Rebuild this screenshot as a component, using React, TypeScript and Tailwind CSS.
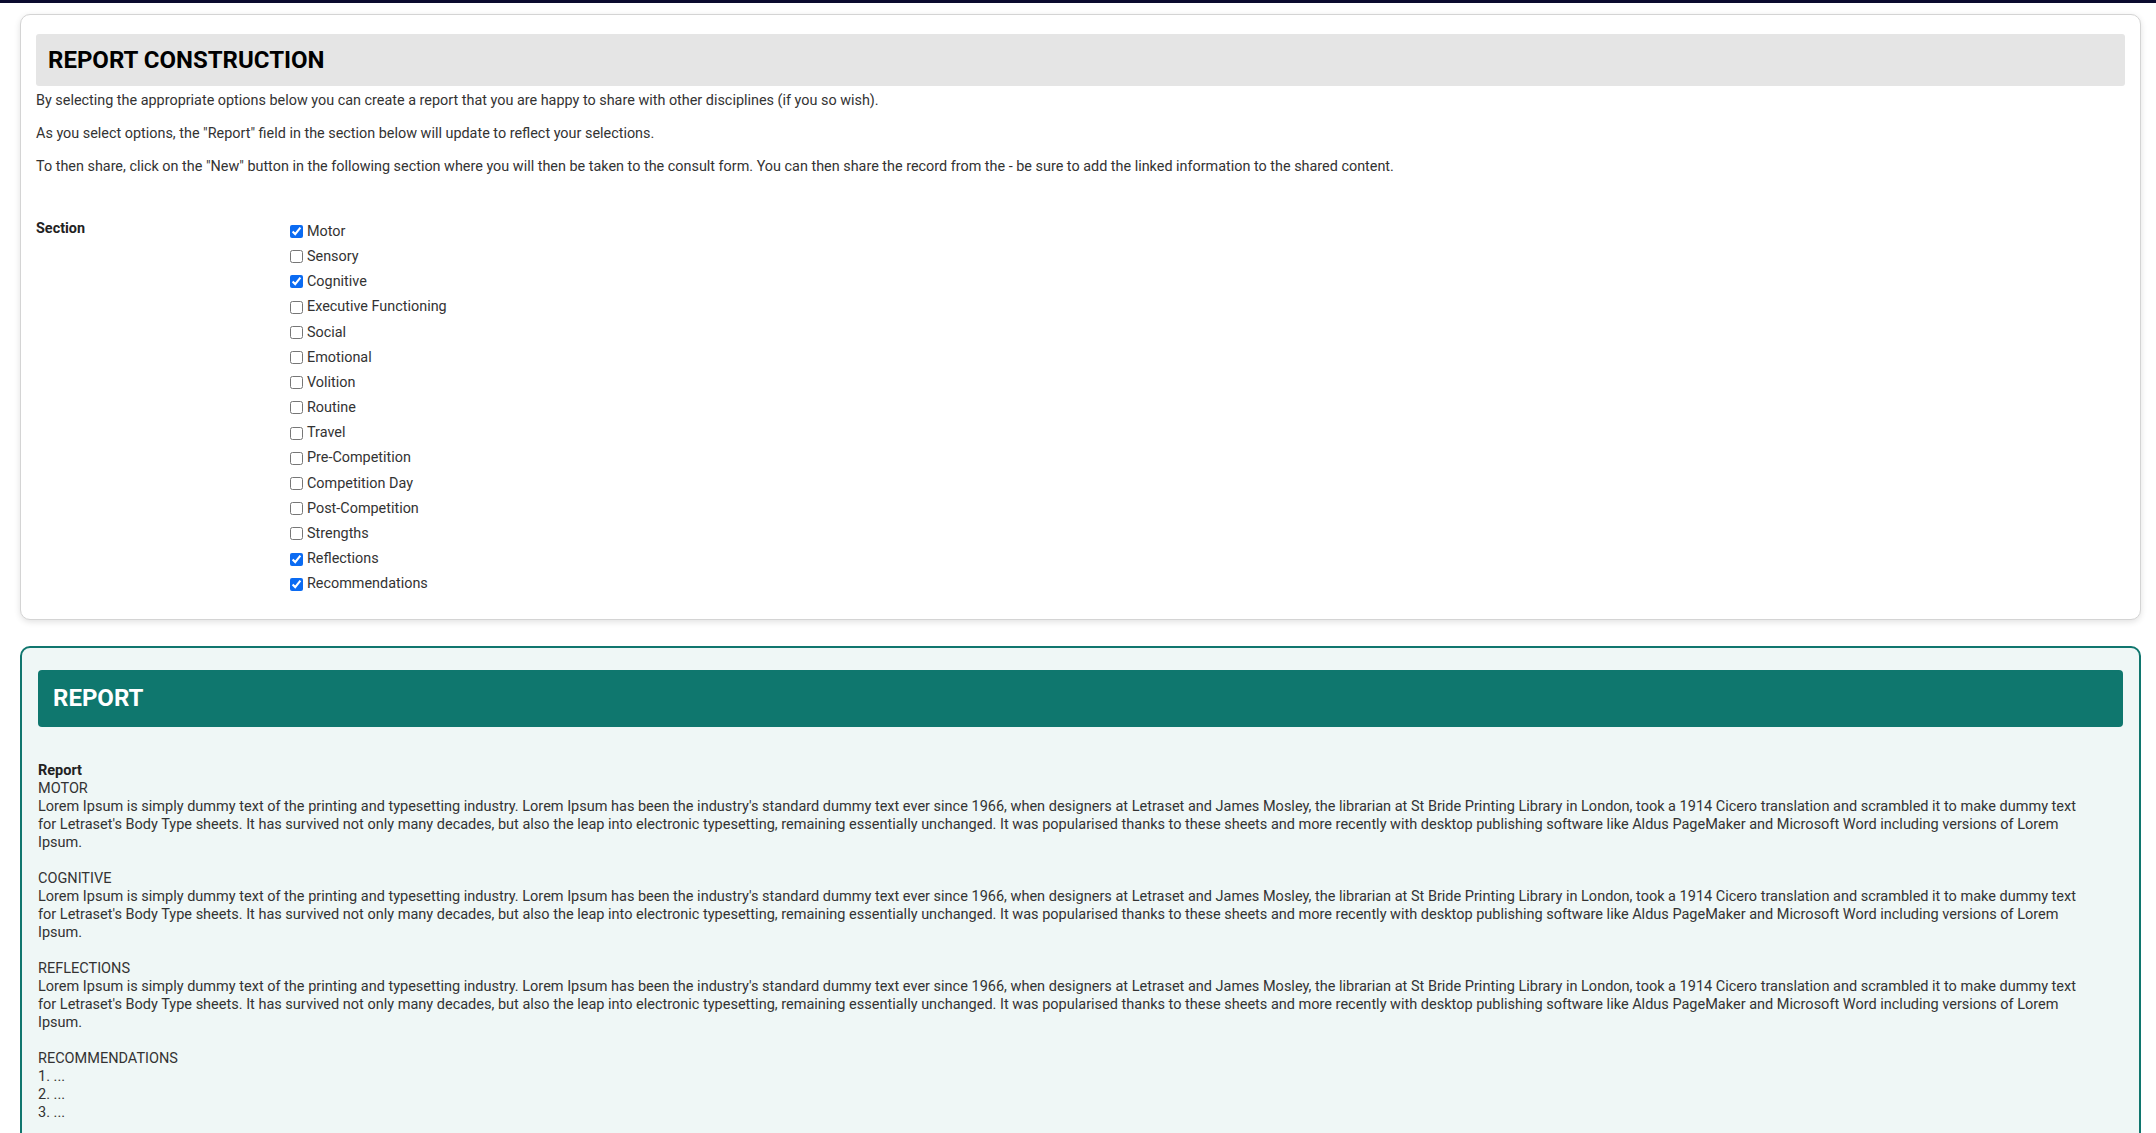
import React from "react";

const items: [string, boolean][] = [
  ["Motor", true], ["Sensory", false], ["Cognitive", true], ["Executive Functioning", false],
  ["Social", false], ["Emotional", false], ["Volition", false], ["Routine", false], ["Travel", false],
  ["Pre-Competition", false], ["Competition Day", false], ["Post-Competition", false],
  ["Strengths", false], ["Reflections", true], ["Recommendations", true],
];

const lorem =
  "Lorem Ipsum is simply dummy text of the printing and typesetting industry. Lorem Ipsum has been the industry's standard dummy text ever since 1966, when designers at Letraset and James Mosley, the librarian at St Bride Printing Library in London, took a 1914 Cicero translation and scrambled it to make dummy text for Letraset's Body Type sheets. It has survived not only many decades, but also the leap into electronic typesetting, remaining essentially unchanged. It was popularised thanks to these sheets and more recently with desktop publishing software like Aldus PageMaker and Microsoft Word including versions of Lorem Ipsum.";

export default function App() {
  return (
    <div className="min-h-[1133px] bg-white text-[#333]" style={{ fontFamily: "Roboto, 'Liberation Sans', sans-serif" }}>
      <div className="h-[3px] bg-[#0b0b2e]" />
      <div className="pl-[20px] pr-[15px] pt-[11px] pb-[16px]">
        <div className="rounded-[10px] border border-[#d4d4d4] bg-white shadow-[0_2px_6px_rgba(0,0,0,0.12)] px-[15px] pt-[19px] pb-[22px]">
          <div className="h-[52px] rounded-[3px] bg-[#e5e5e5] flex items-center px-[12px]">
            <h1 className="text-[24px] font-bold text-black">REPORT CONSTRUCTION</h1>
          </div>
          <div className="mt-[5px] text-[14.4px] leading-[20px] text-[#333]">
            <p className="mb-[13px]">By selecting the appropriate options below you can create a report that you are happy to share with other disciplines (if you so wish).</p>
            <p className="mb-[13px]">As you select options, the "Report" field in the section below will update to reflect your selections.</p>
            <p>To then share, click on the "New" button in the following section where you will then be taken to the consult form. You can then share the record from the - be sure to add the linked information to the shared content.</p>
          </div>
          <div className="mt-[42px] flex">
            <div className="w-[254px] text-[14.4px] font-bold text-[#222] leading-[20px]">Section</div>
            <div className="flex flex-col">
              {items.map(([label, checked]) => (
                <label key={label} className="flex items-center h-[25.2px] text-[14.4px] text-[#333]">
                  <input type="checkbox" defaultChecked={checked} className="w-[13px] h-[13px] mr-[4px] accent-[#0b6bf2]" />
                  {label}
                </label>
              ))}
            </div>
          </div>
        </div>

        <div className="mt-[26px] rounded-[10px] border-2 border-[#10766e] bg-[#eff7f6] px-[16px] pt-[22px] pb-[42px]">
          <div className="h-[57px] rounded-[4px] bg-[#0f776e] flex items-center px-[15px]">
            <h2 className="text-[24px] font-bold text-white">REPORT</h2>
          </div>
          <div className="mt-[35px] text-[14.5px] leading-[18px] text-[#333] pr-[30px]">
            <div className="font-bold text-[#222]">Report</div>
            <div>MOTOR</div>
            <div>{lorem}</div>
            <div className="h-[18px]" />
            <div>COGNITIVE</div>
            <div>{lorem}</div>
            <div className="h-[18px]" />
            <div>REFLECTIONS</div>
            <div>{lorem}</div>
            <div className="h-[18px]" />
            <div>RECOMMENDATIONS</div>
            <div>1. ...</div>
            <div>2. ...</div>
            <div>3. ...</div>
          </div>
        </div>
      </div>
    </div>
  );
}
